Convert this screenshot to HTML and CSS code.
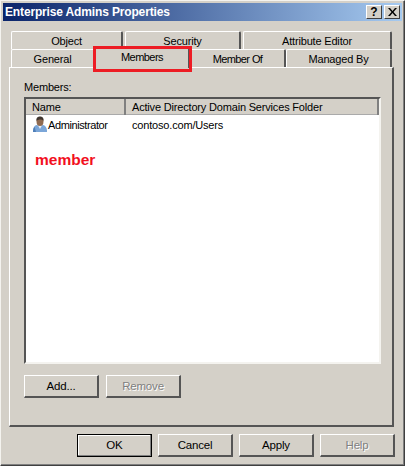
FILE: index.html
```html
<!DOCTYPE html>
<html lang="en">
<head>
<meta charset="utf-8">
<title>Enterprise Admins Properties</title>
<link rel="stylesheet" href="styles.css">
</head>
<body>
<div class="window">
  <div class="titlebar">
    <span class="title">Enterprise Admins Properties</span>
    <div class="caption-buttons">
      <button class="cap help-cap">?</button>
      <button class="cap close-cap"><svg width="9" height="8" viewBox="0 0 9 8"><path d="M0 0h2l2.5 3L7 0h2L5.5 4 9 8H7L4.500 5 2 8H0l3.500-4z" fill="#000"/></svg></button>
    </div>
  </div>
  <div class="tabs">
    <div class="tab-row row-back">
      <div class="tab t-object">Object</div>
      <div class="tab t-security">Security</div>
      <div class="tab t-attr">Attribute Editor</div>
    </div>
    <div class="tab-row row-front">
      <div class="tab t-general">General</div>
      <div class="tab t-members">Members</div>
      <div class="tab t-memberof">Member Of</div>
      <div class="tab t-managed">Managed By</div>
    </div>
  </div>
  <div class="panel">
    <div class="members-label">Members:</div>
    <div class="list">
      <div class="list-head">
        <div class="col col-name">Name</div>
        <div class="col col-folder">Active Directory Domain Services Folder</div>
      </div>
      <div class="list-row">
        <div class="cell-name">
          <svg class="user-icon" width="14" height="17" viewBox="0 0 14 17">
            <path d="M0 16c-.3-4 1.500-6.500 3.500-7l3.500 1 3-1c2.500.5 4.300 3 4 7z" fill="#7ba6d8"/>
            <path d="M0 16c0-2 .5-4 1.500-5.500L3 16z" fill="#4f7fb8"/>
            <path d="M5 9.500 7 13l2-3.500z" fill="#e9eef5"/>
            <ellipse cx="7" cy="5.500" rx="3.500" ry="4.500" fill="#8f6a50"/>
            <path d="M3.500 5C3 1.500 5 .5 7 .5s4 1 3.500 4.500C9.500 3 5 3 3.500 5z" fill="#3f352e"/>
          </svg>
          <span class="admin-name">Administrator</span>
        </div>
        <div class="cell-folder">contoso.com/Users</div>
      </div>
      <div class="member-note">member</div>
    </div>
    <div class="panel-buttons">
      <button class="btn">Add...</button>
      <button class="btn disabled">Remove</button>
    </div>
  </div>
  <div class="footer">
    <button class="btn default">OK</button>
    <button class="btn">Cancel</button>
    <button class="btn">Apply</button>
    <button class="btn disabled">Help</button>
  </div>
  <div class="highlight"></div>
</div>
</body>
</html>
```
FILE: styles.css
```css
* { box-sizing: border-box; }
html, body { margin: 0; padding: 0; }
body {
  width: 405px;
  height: 466px;
  overflow: hidden;
  background: #d4d0c8;
  font-family: "Liberation Sans", Arial, sans-serif;
  font-size: 11px;
  letter-spacing: -0.18px;
  color: #000;
}
.window {
  position: relative;
  width: 405px;
  height: 466px;
  padding: 3px;
  background: #d4d0c8;
  border-style: solid;
  border-width: 1px;
  border-color: #f4f3ef #404040 #404040 #f4f3ef;
  box-shadow: inset -1px -1px 0 #808080;
}
.titlebar {
  height: 18px;
  margin: -1px -1px 0 -1px;
  padding: 0 2px 0 2px;
  display: flex;
  align-items: center;
  justify-content: space-between;
  background: linear-gradient(to right, #0a246a, #a6caf0);
}
.title { color: #fff; font-weight: bold; font-size: 12px; letter-spacing: -0.15px; white-space: nowrap; }
.caption-buttons { display: flex; gap: 2px; }
.cap {
  width: 16px;
  height: 14px;
  padding: 0;
  display: flex;
  align-items: center;
  justify-content: center;
  font: bold 12px "Liberation Sans", Arial, sans-serif;
  color: #000;
  background: #d4d0c8;
  border: 1px solid;
  border-color: #fff #404040 #404040 #fff;
}
.tabs { margin: 10px 0 0 5px; height: 36px; }
.tab-row { display: flex; }
.row-back { height: 18px; gap: 2px; padding-left: 2px; }
.row-front { height: 18px; padding-left: 2px; }
.tab {
  display: flex;
  align-items: center;
  justify-content: center;
  background: #d4d0c8;
  border-top: 1px solid #fff;
  border-left: 1px solid #fff;
  border-right: 2px solid #555;
  border-radius: 2px 2px 0 0;
}
.t-object { width: 112px; }
.t-security { width: 116px; }
.t-attr { width: 149px; }
.t-general { width: 84px; }
.t-members {
  width: 95px;
  height: 22px;
  margin-top: -3px;
  padding-bottom: 2px;
  position: relative;
  z-index: 1;
  letter-spacing: -0.55px;
}
.t-memberof { width: 96px; letter-spacing: -0.6px; }
.t-managed { width: 106px; }
.panel {
  height: 360px;
  margin-left: 5px;
  margin-right: 7px;
  padding: 12px 14px 0 14px;
  border-style: solid;
  border-width: 1px 2px 2px 1px;
  border-color: #fff #555 #555 #fff;
}
.members-label { height: 16px; line-height: 14px; margin-bottom: 1px; }
.list {
  width: 357px;
  height: 267px;
  background: #fff;
  border-style: solid;
  border-width: 2px;
  border-color: #555 #f4f3ef #f4f3ef #555;
}
.list-head {
  height: 16px;
  display: flex;
  background: #d4d0c8;
}
.col {
  display: flex;
  align-items: center;
  padding-left: 6px;
  border-right: 2px solid;
  border-color: #808080;
  box-shadow: inset 0 -1px 0 #aaa;
}
.col-name { width: 100px; }
.col-folder { flex: 1; }
.list-row { height: 19px; display: flex; align-items: center; }
.cell-name { width: 106px; display: flex; align-items: center; gap: 1px; padding-left: 7px; }
.admin-name { letter-spacing: -0.4px; }
.user-icon { flex: none; }
.member-note {
  margin: 17px 0 0 9px;
  color: #f2101e;
  font-weight: bold;
  font-size: 15.5px;
  letter-spacing: 0;
}
.panel-buttons { display: flex; gap: 7px; margin-top: 11px; }
.btn {
  width: 75px;
  height: 23px;
  padding: 0;
  font-family: "Liberation Sans", Arial, sans-serif;
  font-size: 11.5px;
  letter-spacing: -0.18px;
  color: #000;
  background: #d4d0c8;
  border-style: solid;
  border-width: 1px 2px 2px 1px;
  border-color: #fff #555 #555 #fff;
}
.btn.disabled { color: #808080; text-shadow: 1px 1px 0 #fff; }
.btn.default { border: 1px solid #000; box-shadow: inset -1px -1px 0 #808080, inset 1px 1px 0 #fff; }
.footer { display: flex; justify-content: flex-end; gap: 6px; margin: 7px 6px 0 0; }
.footer .btn { padding-bottom: 1px; }
.highlight {
  position: absolute;
  left: 92px;
  top: 45px;
  width: 99px;
  height: 26px;
  border: 3px solid #ed1c24;
  z-index: 2;
}
```
